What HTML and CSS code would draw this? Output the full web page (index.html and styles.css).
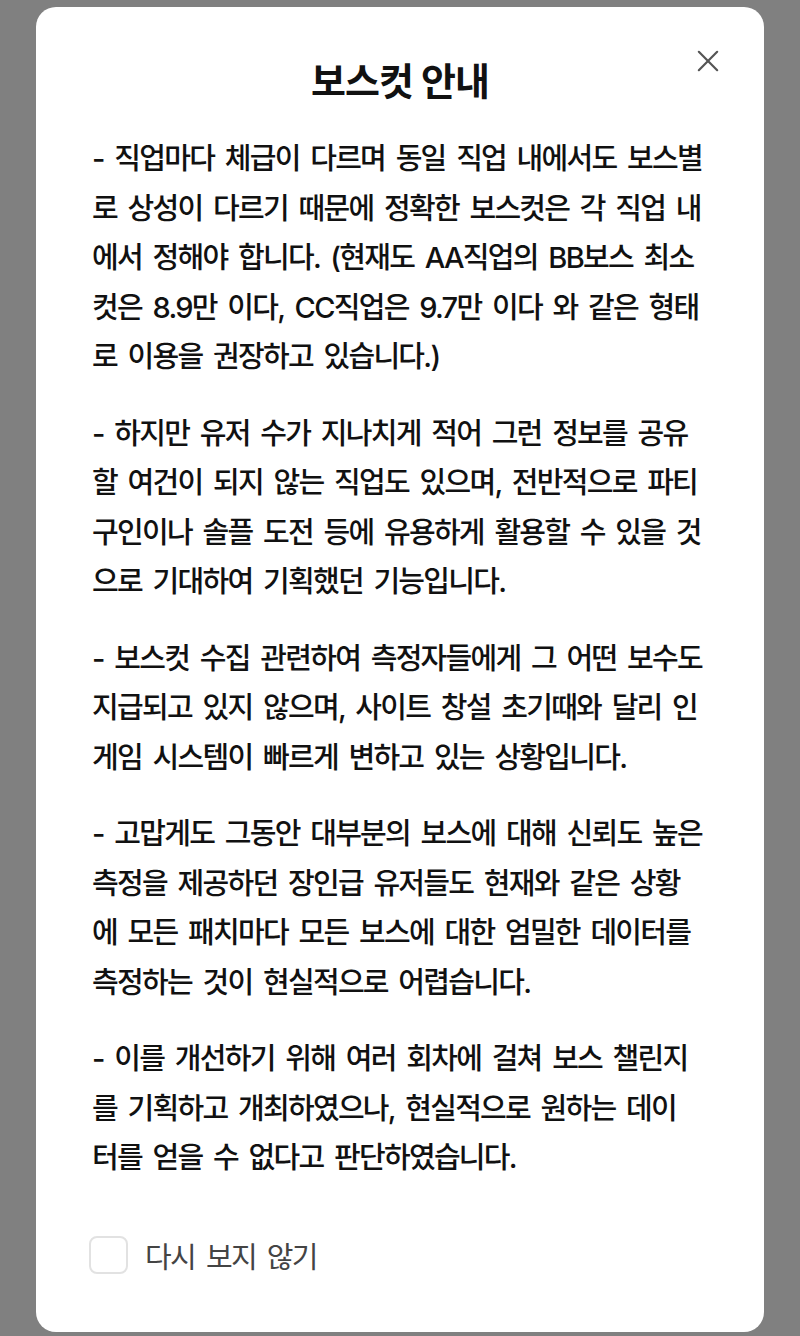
FILE: index.html
```html
<!DOCTYPE html>
<html lang="ko">
<head>
    <meta charset="UTF-8">
    <meta name="viewport" content="width=device-width, initial-scale=1.0">
    <title>보스컷 안내</title>
    <link rel="stylesheet" href="styles.css">
</head>
<body>
    <div class="overlay">
        <div class="modal">
            <div class="modal-header">
                <h2 class="modal-title">보스컷 안내</h2>
                <button class="close-btn" type="button" aria-label="닫기">
                    <svg width="24" height="24" viewBox="0 0 24 24">
                        <path d="M2 2 L22 22 M22 2 L2 22" stroke="#555" stroke-width="2.4" stroke-linecap="round" fill="none"/>
                    </svg>
                </button>
            </div>
            <div class="modal-body">
                <p>- 직업마다 체급이 다르며 동일 직업 내에서도 보스별<br>로 상성이 다르기 때문에 정확한 보스컷은 각 직업 내<br>에서 정해야 합니다. (현재도 AA직업의 BB보스 최소<br>컷은 8.9만 이다, CC직업은 9.7만 이다 와 같은 형태<br>로 이용을 권장하고 있습니다.)</p>
                <p>- 하지만 유저 수가 지나치게 적어 그런 정보를 공유<br>할 여건이 되지 않는 직업도 있으며, 전반적으로 파티<br>구인이나 솔플 도전 등에 유용하게 활용할 수 있을 것<br>으로 기대하여 기획했던 기능입니다.</p>
                <p>- 보스컷 수집 관련하여 측정자들에게 그 어떤 보수도<br>지급되고 있지 않으며, 사이트 창설 초기때와 달리 인<br>게임 시스템이 빠르게 변하고 있는 상황입니다.</p>
                <p>- 고맙게도 그동안 대부분의 보스에 대해 신뢰도 높은<br>측정을 제공하던 장인급 유저들도 현재와 같은 상황<br>에 모든 패치마다 모든 보스에 대한 엄밀한 데이터를<br>측정하는 것이 현실적으로 어렵습니다.</p>
                <p>- 이를 개선하기 위해 여러 회차에 걸쳐 보스 챌린지<br>를 기획하고 개최하였으나, 현실적으로 원하는 데이<br>터를 얻을 수 없다고 판단하였습니다.</p>
            </div>
            <label class="check-row">
                <input type="checkbox" class="check-input">
                <span class="check-box"></span>
                <span class="check-label">다시 보지 않기</span>
            </label>
        </div>
    </div>
</body>
</html>
```

FILE: styles.css
```css
body {
    margin: 0;
    padding: 0;
    background-color: #808080;
    font-family: Inter, "Noto Sans CJK KR", sans-serif;
    color: #111;
    height: 1336px;
    overflow: hidden;
}
.overlay {
    padding: 7px 36px 0;
}
.modal {
    background-color: #fff;
    border-radius: 20px;
    height: 1325px;
    box-sizing: border-box;
    padding: 48px 56px 0;
}
.modal-header {
    position: relative;
}
.modal-title {
    margin: 0;
    text-align: center;
    font-size: 38px;
    font-weight: 700;
    line-height: 52px;
    letter-spacing: -1px;
    color: #111;
}
.close-btn {
    position: absolute;
    top: -14px;
    right: -20px;
    width: 40px;
    height: 40px;
    padding: 0;
    border: none;
    background: none;
    display: flex;
    align-items: center;
    justify-content: center;
    cursor: pointer;
}
.close-btn svg {
    width: 22px;
    height: 22px;
}
.modal-body {
    margin-top: 27px;
}
.modal-body p {
    margin: 0 0 27px;
    font-size: 29px;
    font-weight: 500;
    line-height: 49.5px;
    letter-spacing: -1.7px;
    word-spacing: 4.5px;
    white-space: nowrap;
}
.check-row {
    display: flex;
    align-items: center;
    gap: 17px;
    margin-top: 51px;
    cursor: pointer;
}
.check-input {
    display: none;
}
.check-box {
    width: 39px;
    height: 38px;
    box-sizing: border-box;
    border: 2px solid #e2e2e2;
    border-radius: 8px;
    margin-left: -3px;
}
.check-label {
    font-size: 29px;
    letter-spacing: -1.7px;
    word-spacing: 4.5px;
    color: #444;
}
```
